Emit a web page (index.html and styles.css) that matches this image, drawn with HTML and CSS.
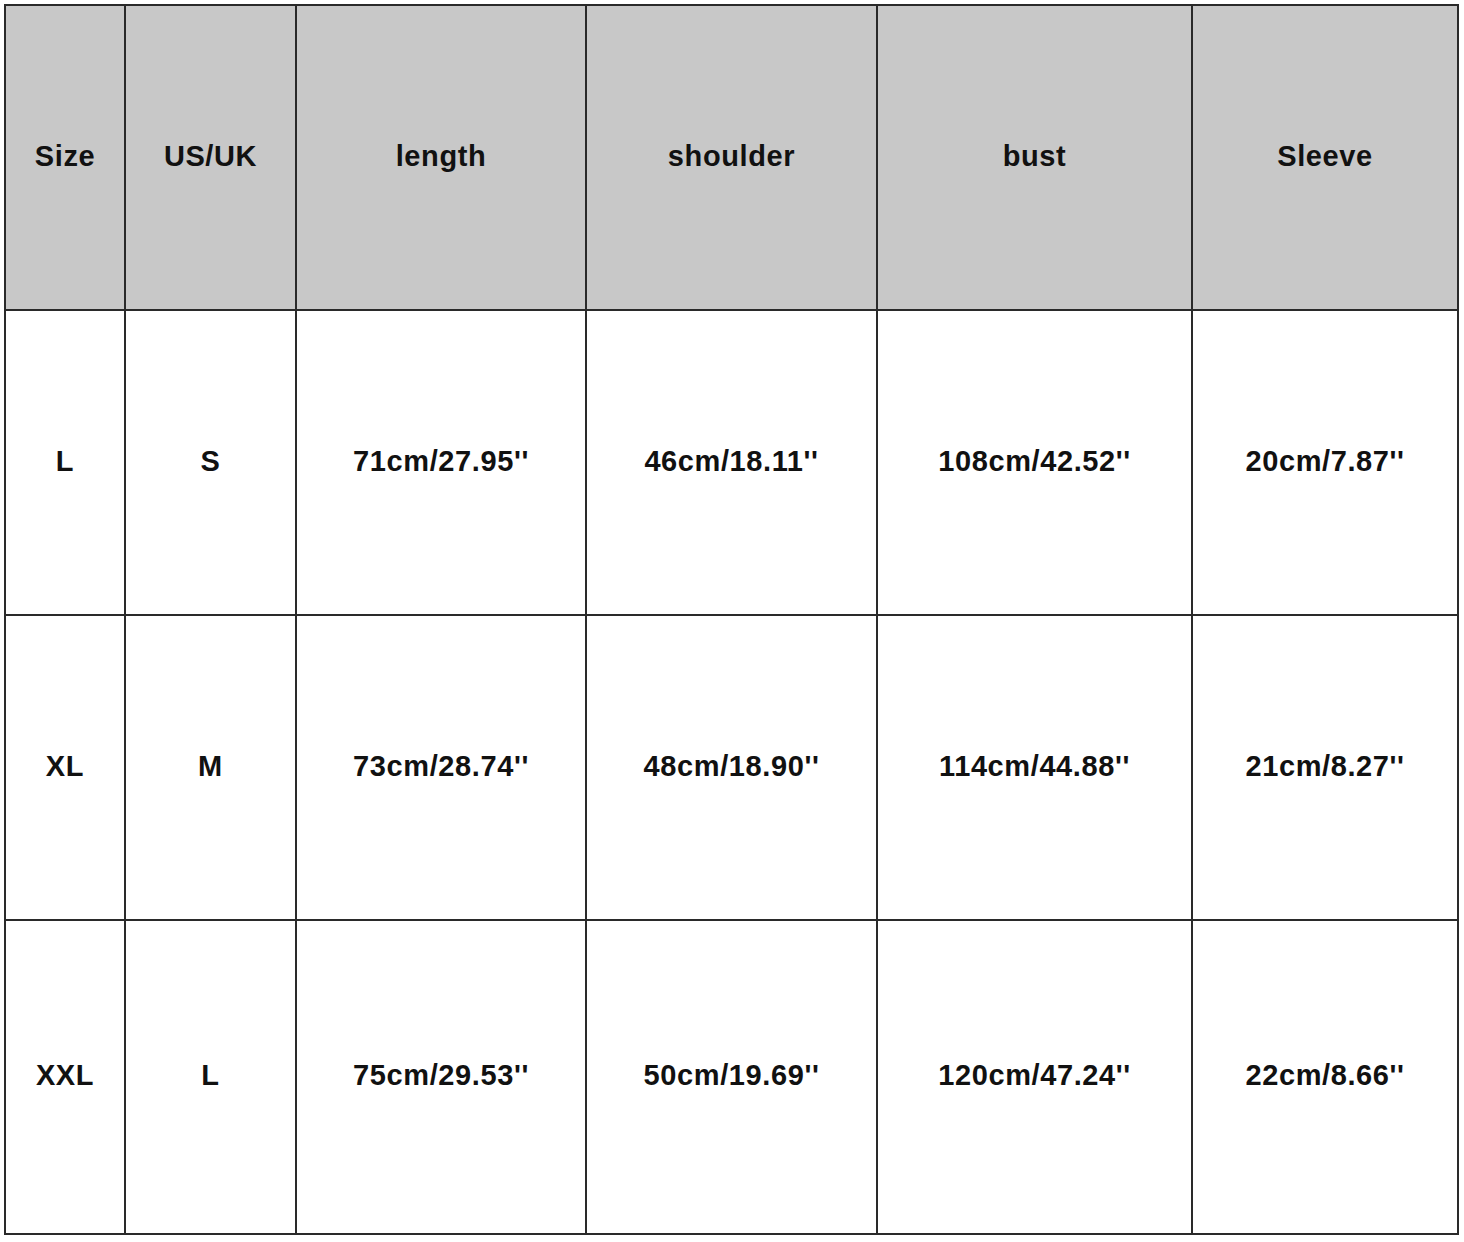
FILE: index.html
```html
<!DOCTYPE html>
<html lang="en">
<head>
<meta charset="utf-8">
<title>Size chart</title>
<link rel="stylesheet" href="styles.css">
</head>
<body>
<table class="size-table">
  <colgroup>
    <col class="c1"><col class="c2"><col class="c3"><col class="c4"><col class="c5"><col class="c6">
  </colgroup>
  <thead>
    <tr class="row-head">
      <th>Size</th><th>US/UK</th><th>length</th><th>shoulder</th><th>bust</th><th>Sleeve</th>
    </tr>
  </thead>
  <tbody>
    <tr class="row">
      <td>L</td><td>S</td><td>71cm/27.95''</td><td>46cm/18.11''</td><td>108cm/42.52''</td><td>20cm/7.87''</td>
    </tr>
    <tr class="row">
      <td>XL</td><td>M</td><td>73cm/28.74''</td><td>48cm/18.90''</td><td>114cm/44.88''</td><td>21cm/8.27''</td>
    </tr>
    <tr class="row row-last">
      <td>XXL</td><td>L</td><td>75cm/29.53''</td><td>50cm/19.69''</td><td>120cm/47.24''</td><td>22cm/8.66''</td>
    </tr>
  </tbody>
</table>
</body>
</html>
```
FILE: styles.css
```css
html, body {
  margin: 0;
  padding: 0;
  background: #ffffff;
}
body {
  padding: 4px 0 0 4px;
}
.size-table {
  border-collapse: separate;
  border-spacing: 2px;
  background: #2a2a2a;
  table-layout: fixed;
  width: 1455px;
  font-family: "Liberation Sans", Arial, sans-serif;
  font-weight: bold;
  font-size: 29px;
  letter-spacing: 0.6px;
  color: #111111;
}
.c1 { width: 118px; }
.c2 { width: 169px; }
.c3 { width: 288px; }
.c4 { width: 289px; }
.c5 { width: 313px; }
.c6 { width: 264px; }
.size-table th,
.size-table td {
  padding: 0 0 3px 0;
  text-align: center;
  vertical-align: middle;
  font-weight: bold;
}
.size-table th {
  background: #c8c8c8;
  height: 300px;
}
.size-table td {
  background: #ffffff;
  height: 300px;
}
.row-last td {
  height: 309px;
}
```
